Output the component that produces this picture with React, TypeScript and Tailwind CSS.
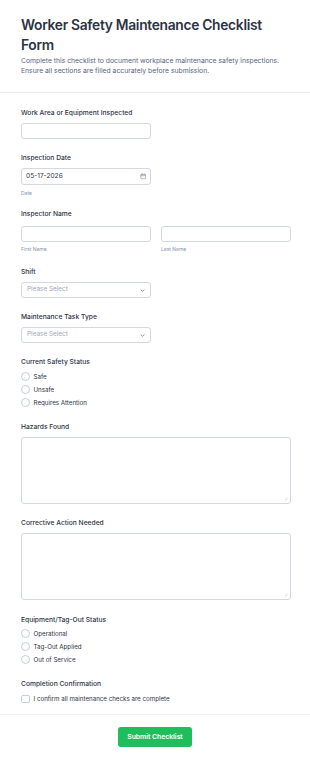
import React from "react";

const labelCls = "block text-[6.7px] font-medium text-[#2c3345] leading-[10px]";
const boxCls = "rounded-[3px] border border-[#d3d7e0] bg-white";

function Radio({ label }: { label: string }) {
  return (
    <div className="flex items-center gap-[4px] h-[13px]">
      <span className="w-[8.5px] h-[8.5px] rounded-full border border-[#c6ccd8] bg-white shrink-0" />
      <span className="text-[6.2px] text-[#2c3345]">{label}</span>
    </div>
  );
}

function Chevron() {
  return (
    <svg width="5" height="5" viewBox="0 0 24 24" fill="none" stroke="#57647e" strokeWidth="3.5" strokeLinecap="round" strokeLinejoin="round">
      <path d="M5 9l7 7 7-7" />
    </svg>
  );
}

function Calendar() {
  return (
    <svg width="6.5" height="6.5" viewBox="0 0 24 24" fill="none" stroke="#8a93a6" strokeWidth="2.4" strokeLinecap="round" strokeLinejoin="round">
      <rect x="3" y="5" width="18" height="16" rx="2" />
      <path d="M3 10h18M8 3v4M16 3v4" />
    </svg>
  );
}

function Grip() {
  return (
    <svg className="absolute right-[2px] bottom-[2px]" width="4" height="4" viewBox="0 0 8 8" stroke="#b8bdc8" strokeWidth="1">
      <path d="M7 1L1 7M7 4L4 7" />
    </svg>
  );
}

export default function App() {
  return (
    <div className="w-[310px] h-[764px] bg-white" style={{ fontFamily: "Inter, 'Noto Sans', sans-serif" }}>
      <div className="px-[21px] pt-[15px] pb-[16px] border-b border-[#e8e9ee]">
        <h1 className="text-[13.8px] font-semibold leading-[20px] tracking-[-0.3px] text-[#2c3345]">Worker Safety Maintenance Checklist Form</h1>
        <p className="mt-[1px] text-[6.8px] leading-[10px] text-[#57647e]">
          Complete this checklist to document workplace maintenance safety inspections. Ensure all sections are filled accurately before submission.
        </p>
      </div>

      <div className="pl-[21px] pr-[19px] pt-[15px]">
        <label className={labelCls}>Work Area or Equipment Inspected</label>
        <div className={`mt-[5px] w-[130px] h-[16px] ${boxCls}`} />

        <label className={`${labelCls} mt-[14px]`}>Inspection Date</label>
        <div className={`mt-[5px] w-[130px] h-[17px] ${boxCls} flex items-center justify-between pl-[4px] pr-[4px]`}>
          <span className="text-[6.6px] text-[#2c3345]">05-17-2026</span>
          <Calendar />
        </div>
        <div className="mt-[5px] text-[5px] leading-[7px] text-[#8a93a6]">Date</div>

        <label className={`${labelCls} mt-[12px]`}>Inspector Name</label>
        <div className="mt-[7px] flex gap-[10px]">
          <div className="flex-1">
            <div className={`h-[16px] ${boxCls}`} />
            <div className="mt-[4px] text-[5px] leading-[7px] text-[#8a93a6]">First Name</div>
          </div>
          <div className="flex-1">
            <div className={`h-[16px] ${boxCls}`} />
            <div className="mt-[4px] text-[5px] leading-[7px] text-[#8a93a6]">Last Name</div>
          </div>
        </div>

        <label className={`${labelCls} mt-[14px]`}>Shift</label>
        <div className={`mt-[5px] w-[130px] h-[16px] ${boxCls} flex items-center justify-between pl-[5px] pr-[5px]`}>
          <span className="text-[6.4px] text-[#a0a7b7]">Please Select</span>
          <Chevron />
        </div>

        <label className={`${labelCls} mt-[14px]`}>Maintenance Task Type</label>
        <div className={`mt-[5px] w-[130px] h-[16px] ${boxCls} flex items-center justify-between pl-[5px] pr-[5px]`}>
          <span className="text-[6.4px] text-[#a0a7b7]">Please Select</span>
          <Chevron />
        </div>

        <label className={`${labelCls} mt-[14px]`}>Current Safety Status</label>
        <div className="mt-[3px]">
          <Radio label="Safe" />
          <Radio label="Unsafe" />
          <Radio label="Requires Attention" />
        </div>

        <label className={`${labelCls} mt-[13px]`}>Hazards Found</label>
        <div className={`relative mt-[5px] h-[67px] ${boxCls}`}>
          <Grip />
        </div>

        <label className={`${labelCls} mt-[14px]`}>Corrective Action Needed</label>
        <div className={`relative mt-[5px] h-[67px] ${boxCls}`}>
          <Grip />
        </div>

        <label className={`${labelCls} mt-[15px]`}>Equipment/Tag-Out Status</label>
        <div className="mt-[2px]">
          <Radio label="Operational" />
          <Radio label="Tag-Out Applied" />
          <Radio label="Out of Service" />
        </div>

        <label className={`${labelCls} mt-[13px]`}>Completion Confirmation</label>
        <div className="mt-[5px] flex items-center gap-[4px] h-[10px]">
          <span className="w-[8.5px] h-[8.5px] rounded-[2px] border border-[#c6ccd8] bg-white shrink-0" />
          <span className="text-[6.2px] text-[#2c3345]">I confirm all maintenance checks are complete</span>
        </div>
      </div>

      <div className="mt-[10px] border-t border-[#f1f2f5] flex justify-center pt-[12px]">
        <button className="w-[74px] h-[20px] rounded-[3px] bg-[#1fbd5b] text-white text-[6.8px] font-semibold">Submit Checklist</button>
      </div>
    </div>
  );
}
